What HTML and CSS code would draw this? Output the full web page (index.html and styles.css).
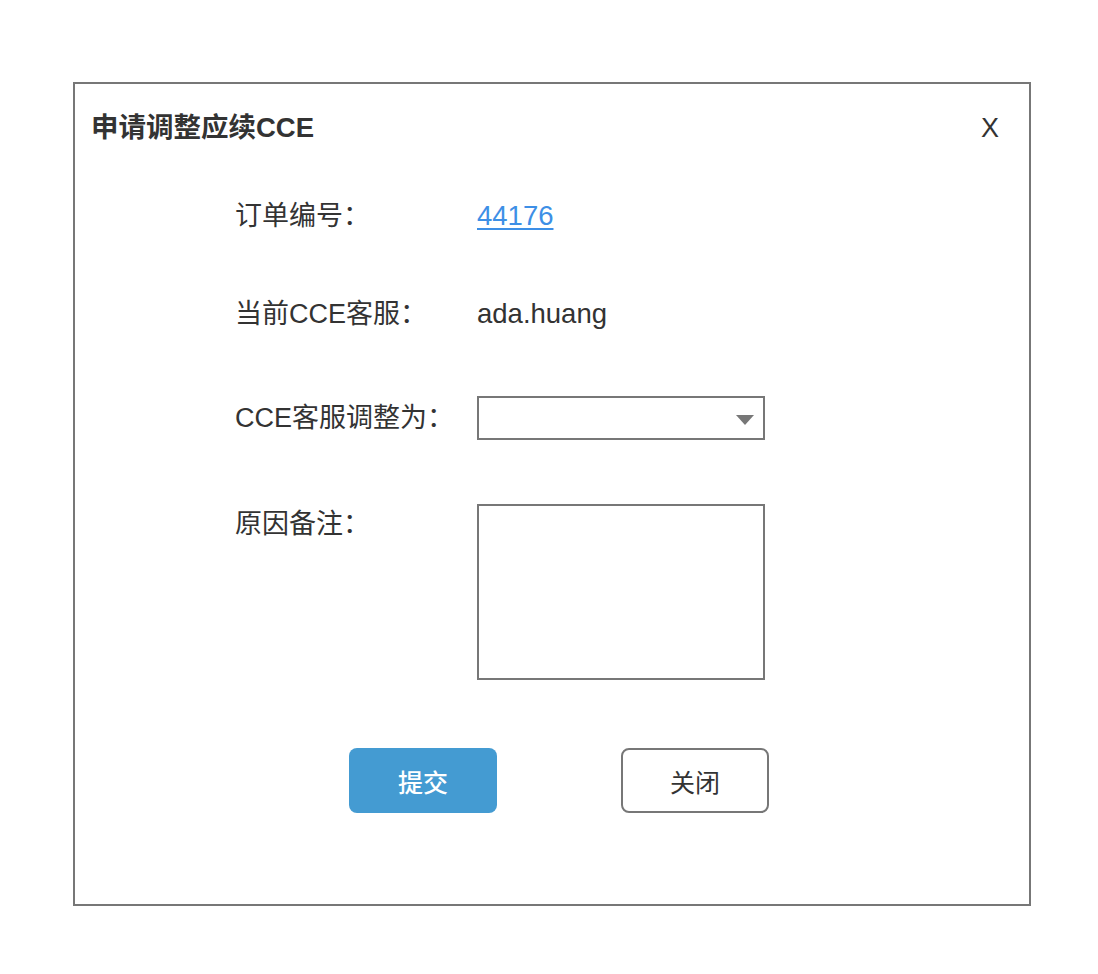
FILE: index.html
```html
<!DOCTYPE html>
<html lang="zh-CN">
<head>
<meta charset="utf-8">
<title>申请调整应续CCE</title>
<link rel="stylesheet" href="styles.css">
</head>
<body>
<div class="dialog">
  <div class="dialog-header">
    <h1 class="dialog-title">申请调整应续CCE</h1>
    <span class="dialog-close">X</span>
  </div>
  <div class="form">
    <div class="row row-1">
      <div class="label">订单编号：</div>
      <div class="value"><a class="link" href="#">44176</a></div>
    </div>
    <div class="row row-2">
      <div class="label">当前CCE客服：</div>
      <div class="value">ada.huang</div>
    </div>
    <div class="row row-3">
      <div class="label label-select">CCE客服调整为：</div>
      <div class="select"><span class="caret"></span></div>
    </div>
    <div class="row row-4">
      <div class="label">原因备注：</div>
      <div class="textarea"></div>
    </div>
  </div>
  <div class="actions">
    <button class="btn btn-primary">提交</button>
    <button class="btn btn-default">关闭</button>
  </div>
</div>
</body>
</html>
```

FILE: styles.css
```css
html, body {
  margin: 0;
  padding: 0;
  background: #fff;
}
body {
  font-family: "Liberation Sans", "Noto Sans CJK SC", sans-serif;
  color: #333;
}
.dialog {
  box-sizing: border-box;
  margin: 82px 0 0 73px;
  width: 958px;
  height: 824px;
  border: 2px solid #777;
  background: #fff;
}
.dialog-header {
  display: flex;
  align-items: center;
  justify-content: space-between;
  height: 40px;
  margin-top: 24px;
  padding: 0 30px 0 16px;
}
.dialog-title {
  margin: 0;
  font-size: 27.5px;
  font-weight: bold;
  line-height: 40px;
  color: #333;
}
.dialog-close {
  font-size: 27px;
  line-height: 40px;
  color: #333;
}
.form {
  display: flex;
  flex-direction: column;
  padding-left: 160px;
}
.row {
  display: flex;
  align-items: flex-start;
}
.row-1 { margin-top: 48px; }
.row-2 { margin-top: 58px; }
.row-3 { margin-top: 62px; }
.row-4 { margin-top: 64px; }
.label {
  width: 242px;
  font-size: 27px;
  line-height: 40px;
  color: #333;
}
.label-select {
  line-height: 44px;
}
.value {
  font-size: 27.5px;
  line-height: 40px;
  color: #333;
}
.link {
  color: #3d8fe6;
  text-decoration: underline;
  text-underline-offset: 3px;
  text-decoration-thickness: 2px;
}
.select {
  box-sizing: border-box;
  position: relative;
  width: 288px;
  height: 44px;
  border: 2px solid #777;
  background: #fff;
}
.caret {
  position: absolute;
  right: 9px;
  top: 17px;
  width: 0;
  height: 0;
  border-left: 9px solid transparent;
  border-right: 9px solid transparent;
  border-top: 10px solid #777;
}
.textarea {
  box-sizing: border-box;
  width: 288px;
  height: 176px;
  border: 2px solid #777;
  background: #fff;
}
.actions {
  display: flex;
  gap: 124px;
  margin-top: 68px;
  padding-left: 274px;
}
.btn {
  box-sizing: border-box;
  width: 148px;
  height: 65px;
  border-radius: 8px;
  font-family: "Liberation Sans", "Noto Sans CJK SC", sans-serif;
  font-size: 25px;
  cursor: pointer;
  padding: 0;
}
.btn-primary {
  background: #449bd2;
  border: none;
  color: #fff;
  font-weight: 500;
}
.btn-default {
  background: #fff;
  border: 2px solid #777;
  color: #333;
}
```
